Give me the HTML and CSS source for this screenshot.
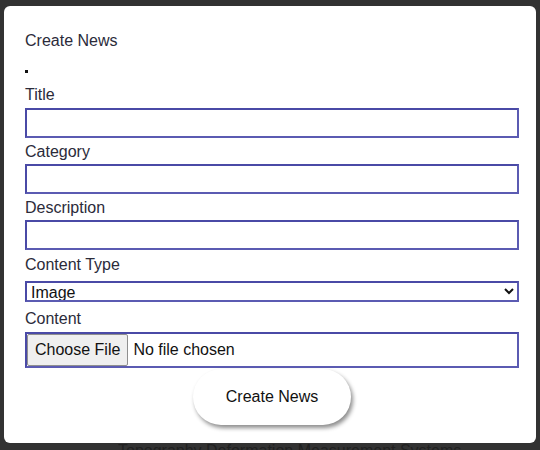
FILE: index.html
```html
<!DOCTYPE html>
<html lang="en">
<head>
<meta charset="utf-8">
<title>Create News</title>
<link rel="stylesheet" href="styles.css">
</head>
<body>
<div class="page">
  <p class="page-text">Topography Deformation Measurement Systems</p>
</div>
<div class="modal">
  <h2 class="modal-title">Create News</h2>
  <span class="dot"></span>
  <form class="form">
    <label class="label label-first" for="title">Title</label>
    <input class="field field-first" id="title" type="text">
    <label class="label" for="category">Category</label>
    <input class="field" id="category" type="text">
    <label class="label" for="description">Description</label>
    <input class="field" id="description" type="text">
    <label class="label label-type" for="ctype">Content Type</label>
    <select class="select" id="ctype">
      <option>Image</option>
      <option>Video</option>
    </select>
    <label class="label label-content" for="content">Content</label>
    <input class="file" id="content" type="file">
    <button class="submit" type="button">Create News</button>
  </form>
</div>
</body>
</html>
```

FILE: styles.css
```css
html, body {
  margin: 0;
  padding: 0;
}
body {
  background: #323232;
  font-family: "Liberation Sans", Arial, sans-serif;
  width: 540px;
  height: 450px;
  overflow: hidden;
  position: relative;
}
.page {
  padding: 442px 0 0 118px;
}
.page-text {
  margin: 0;
  font-size: 16px;
  line-height: 18px;
  color: #202020;
  white-space: nowrap;
}
.modal {
  position: absolute;
  left: 4px;
  top: 6px;
  width: 532px;
  height: 437px;
  box-sizing: border-box;
  background: #fff;
  border-radius: 6px;
  padding: 26px 17px 0 21px;
  display: flex;
  flex-direction: column;
  align-items: flex-start;
}
.modal-title {
  margin: 0;
  font-size: 16px;
  font-weight: normal;
  line-height: 18px;
  color: #2b2b3a;
}
.dot {
  display: block;
  width: 3px;
  height: 3px;
  background: #111;
  margin-top: 20px;
}
.form {
  display: flex;
  flex-direction: column;
  width: 494px;
}
.label {
  font-size: 16px;
  line-height: 18px;
  color: #2b2b3a;
  margin-top: 5px;
}
.label-first { margin-top: 13px; }
.label-type { margin-top: 6px; }
.label-content { margin-top: 8px; }
.field {
  box-sizing: border-box;
  width: 494px;
  height: 30px;
  margin: 3px 0 0;
  border: 2px solid #5b5bb2;
  border-top-color: #4a4aa6;
  border-left-color: #4a4aa6;
  background: #fff;
  font-family: inherit;
  font-size: 16px;
  padding: 0 4px;
  outline: none;
}
.field-first { margin-top: 4px; }
.select {
  box-sizing: border-box;
  width: 494px;
  height: 21px;
  margin: 7px 0 0;
  border: 2px solid #5b5bb2;
  border-top-color: #4a4aa6;
  border-left-color: #4a4aa6;
  border-radius: 0;
  background: #fff;
  font-family: inherit;
  font-size: 16px;
  line-height: 17px;
  padding: 0;
  color: #111;
  outline: none;
}
.file {
  box-sizing: border-box;
  width: 494px;
  height: 36px;
  margin: 4px 0 0;
  border: 2px solid #5b5bb2;
  border-top-color: #4a4aa6;
  border-left-color: #4a4aa6;
  padding: 0;
  font-family: inherit;
  font-size: 16px;
  color: #111;
  background: #fff;
}
.file::file-selector-button {
  height: 32px;
  margin: 0 5px 0 0;
  padding: 0 7px;
  font-family: inherit;
  font-size: 16px;
  color: #111;
  background: #efefef;
  border: 1px solid #8f8f8f;
  border-radius: 2px;
}
.submit {
  align-self: center;
  margin-top: 1px;
  width: 158px;
  height: 56px;
  border: none;
  border-radius: 28px;
  background: #fff;
  box-shadow: 2px 3px 4px rgba(0, 0, 0, 0.45);
  font-family: inherit;
  font-size: 16px;
  color: #111;
  cursor: pointer;
}
```
